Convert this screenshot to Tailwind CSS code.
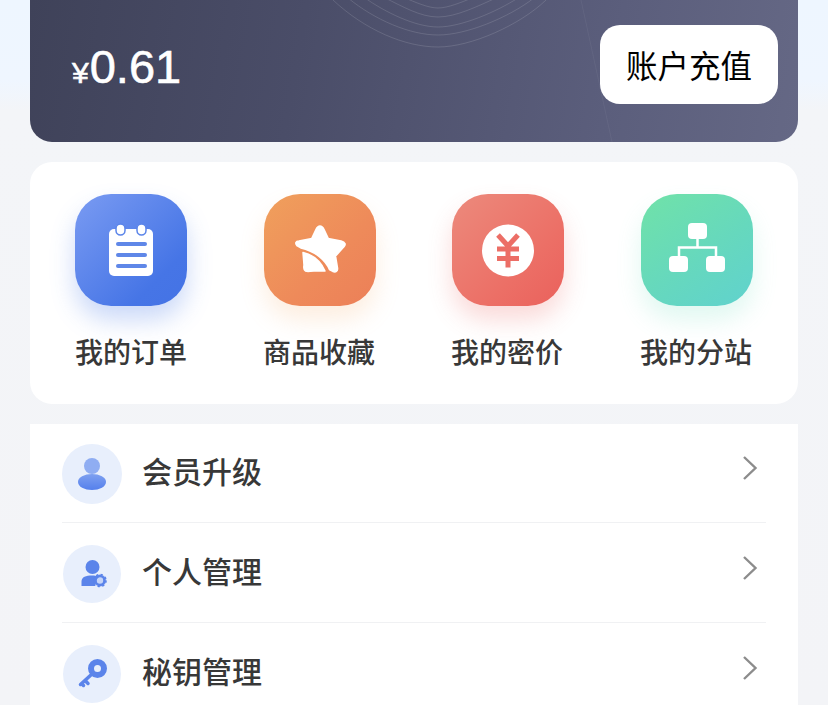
<!DOCTYPE html>
<html lang="zh"><head><meta charset="utf-8">
<script src="https://cdn.jsdelivr.net/npm/@tailwindcss/browser@4"></script>
</head>
<body class="m-0">
<div class="w-[828px] h-[705px] overflow-hidden bg-[#f3f4f7] bg-[linear-gradient(180deg,#eef6ff_0px,#eff6ff_80px,#f3f5f8_110px,#f3f4f7_100%)] px-[30px] font-['Noto_Sans_CJK_SC',sans-serif]">
  <div class="relative h-[142px] rounded-b-[22px] overflow-hidden bg-[linear-gradient(100deg,#3f4259_0%,#4a4d68_35%,#5b5e7c_75%,#656885_100%)] flex items-end justify-between pb-[38px] pr-[20px] pl-[42px]">
    <svg class="absolute left-0 top-0" width="768" height="142" fill="none" stroke="#ffffff" stroke-opacity="0.13" stroke-width="1">
      <path d="M303 0C335 30 375 47 408 47C441 47 490 25 516 0"/>
      <path d="M318 -2C345 20 380 35 408 35C436 35 478 18 504 -2"/>
      <path d="M335 -2C355 12 385 27 408 27C431 27 466 12 488 -2"/>
      <path d="M355 -2C372 6 390 17 408 17C426 17 448 6 466 -2"/>
      <path d="M375 -2C385 2 398 8 408 8C418 8 432 2 442 -2"/>
      <path d="M551 0L582 142" stroke-opacity="0.05"/>
    </svg>
    <div class="relative flex items-baseline text-white font-['Liberation_Sans',sans-serif] mb-[14px] [-webkit-text-stroke:0.6px_white]">
      <span class="text-[30px] leading-none">¥</span><span class="text-[47px] leading-none ml-[1px]">0.61</span>
    </div>
    <button class="relative w-[178px] h-[79px] rounded-[20px] bg-white text-[31.500px] font-normal text-black flex items-center justify-center">账户充值</button>
  </div>

  <div class="mt-[20px] h-[242px] rounded-[22px] bg-white relative">
    <div class="absolute left-[45px] top-[32px]">
      <div class="w-[112px] h-[112px] rounded-[36px] bg-[linear-gradient(135deg,#7a9bf2_0%,#4675e6_75%,#4473e5_100%)] shadow-[0_14px_24px_rgba(70,117,230,0.28)]">
        <svg width="112" height="112" viewBox="0 0 112 112"><rect x="34" y="35" width="44" height="47" rx="5" fill="#fff"/><rect x="41" y="30" width="9" height="11" rx="4.5" fill="#fff" stroke="#5a84e9" stroke-width="1.5"/><rect x="62" y="30" width="9" height="11" rx="4.5" fill="#fff" stroke="#5a84e9" stroke-width="1.5"/><g fill="#5f87e8"><rect x="41" y="48" width="31" height="4" rx="2"/><rect x="41" y="59" width="31" height="4" rx="2"/><rect x="41" y="70" width="31" height="4" rx="2"/></g></svg>
      </div>
    </div>
    <div class="absolute left-[234px] top-[32px]">
      <div class="w-[112px] h-[112px] rounded-[36px] bg-[linear-gradient(135deg,#f0a05c_0%,#ee8a5a_60%,#ec7f58_100%)] shadow-[0_14px_24px_rgba(245,170,100,0.2)]">
        <svg width="112" height="112" viewBox="0 0 112 112"><path d="M56 32.500C57.500 32.500 58.500 33.500 59.500 35.500L64 45L77 47.500C81 48.500 81.500 50.500 79.500 52.500L71 62L73 74C73.500 77 71.500 78 69 77L66 75.500C62 66 52 57 37 53.500L33.500 51.500C31.500 49.500 32 47.500 35 47.500L48 45L52.500 35.500C53.500 33.500 54.500 32.500 56 32.500Z" fill="#fff" stroke="#fff" stroke-width="2.500" stroke-linejoin="round"/><path d="M39 58.500C50 61 57 68 61 77L50 77C46 77 44 78 41.500 77C39.500 76 39.500 74 40 71Z" fill="#fff" stroke="#fff" stroke-width="1.500" stroke-linejoin="round"/></svg>
      </div>
    </div>
    <div class="absolute left-[422px] top-[32px]">
      <div class="w-[112px] h-[112px] rounded-[36px] bg-[linear-gradient(135deg,#ec8a7c_0%,#ec6f66_65%,#ea615c_100%)] shadow-[0_14px_24px_rgba(235,100,95,0.24)]">
        <svg width="112" height="112" viewBox="0 0 112 112"><circle cx="56" cy="56.500" r="26" fill="#fff"/><path d="M46 41L56 52L66 41M45 55H67M45 64.500H67M56 52V73.500" fill="none" stroke="#ec6e66" stroke-width="5"/></svg>
      </div>
    </div>
    <div class="absolute left-[611px] top-[32px]">
      <div class="w-[112px] h-[112px] rounded-[36px] bg-[linear-gradient(145deg,#70e2a8_0%,#66d8bd_55%,#60d2ce_100%)] shadow-[0_14px_24px_rgba(100,220,185,0.2)]">
        <svg width="112" height="112" viewBox="0 0 112 112"><g fill="#fff"><rect x="47" y="29" width="19" height="16" rx="4"/><rect x="28" y="62" width="19" height="16" rx="4"/><rect x="65" y="62" width="19" height="16" rx="4"/></g><path d="M56.500 44V53.500M38 63V53.500H75V63" fill="none" stroke="#fff" stroke-width="2.500"/></svg>
      </div>
    </div>
    <div class="absolute left-0 top-[169px] w-full h-[40px] text-[#383838] text-[28px] leading-[40px] font-medium">
      <span class="absolute left-[45px]">我的订单</span><span class="absolute left-[233px]">商品收藏</span><span class="absolute left-[421px]">我的密价</span><span class="absolute left-[610px]">我的分站</span>
    </div>
  </div>

  <div class="mt-[20px] bg-white px-[32px]">
    <div class="h-[99px] border-b border-[#f0f1f3] flex items-center gap-[20px]">
      <div class="w-[60px] h-[60px] rounded-full bg-[#e8effc] flex items-center justify-center shrink-0 relative top-[1px]">
        <svg width="60" height="60" viewBox="0 0 60 60"><defs><linearGradient id="g1" x1="0" y1="0" x2="0" y2="1"><stop offset="0" stop-color="#7ea0f0"/><stop offset="1" stop-color="#5580ec"/></linearGradient></defs><circle cx="30" cy="22" r="8" fill="#8fadf2"/><ellipse cx="30" cy="38" rx="14" ry="8" fill="url(#g1)"/></svg>
      </div>
      <span class="text-[30px] leading-[40px] font-medium text-[#383838] mb-[7px]">会员升级</span>
      <svg class="ml-auto mr-[8px] mb-[10px]" width="16" height="26" viewBox="0 0 16 26" fill="none"><path d="M2 2L13.500 13L2 24" stroke="#8c8c8c" stroke-width="2.400"/></svg>
    </div>
    <div class="h-[100px] border-b border-[#f0f1f3] flex items-center gap-[21px] pl-[1px]">
      <div class="w-[58px] h-[58px] rounded-full bg-[#e8effc] flex items-center justify-center shrink-0 relative top-[1px]">
        <svg width="58" height="58" viewBox="0 0 58 58"><circle cx="29.500" cy="22" r="7" fill="#5b84ea"/><path d="M18.500 41V36.500C18.500 32 23 30.500 29 30.500C32 30.500 34 31 36 32C33 34.500 31 38 32.500 41Z" fill="#5b84ea"/><circle cx="37" cy="35.500" r="6.500" fill="#5b84ea" opacity="0.25"/><circle cx="37" cy="35.500" r="4.500" fill="none" stroke="#5b84ea" stroke-width="2.600"/><circle cx="37" cy="35.500" r="6" fill="none" stroke="#5b84ea" stroke-width="1.600" stroke-dasharray="2.200 2.500"/></svg>
      </div>
      <span class="text-[30px] leading-[40px] font-medium text-[#383838] mb-[6px]">个人管理</span>
      <svg class="ml-auto mr-[8px] mb-[10px]" width="16" height="26" viewBox="0 0 16 26" fill="none"><path d="M2 2L13.500 13L2 24" stroke="#8c8c8c" stroke-width="2.400"/></svg>
    </div>
    <div class="h-[100px] flex items-center gap-[21px] pl-[1px]">
      <div class="w-[58px] h-[58px] rounded-full bg-[#e8effc] flex items-center justify-center shrink-0 relative top-[1px]">
        <svg width="58" height="58" viewBox="0 0 58 58"><circle cx="34.500" cy="23.500" r="6.500" fill="none" stroke="#5b84ea" stroke-width="6"/><path d="M29 29L17.500 39.500M22 35.500L25 38.500M18.500 38.500L20.500 40.500" fill="none" stroke="#5b84ea" stroke-width="3.500" stroke-linecap="round"/></svg>
      </div>
      <span class="text-[30px] leading-[40px] font-medium text-[#383838] mb-[6px]">秘钥管理</span>
      <svg class="ml-auto mr-[8px] mb-[10px]" width="16" height="26" viewBox="0 0 16 26" fill="none"><path d="M2 2L13.500 13L2 24" stroke="#8c8c8c" stroke-width="2.400"/></svg>
    </div>
  </div>
</div>
</body></html>
